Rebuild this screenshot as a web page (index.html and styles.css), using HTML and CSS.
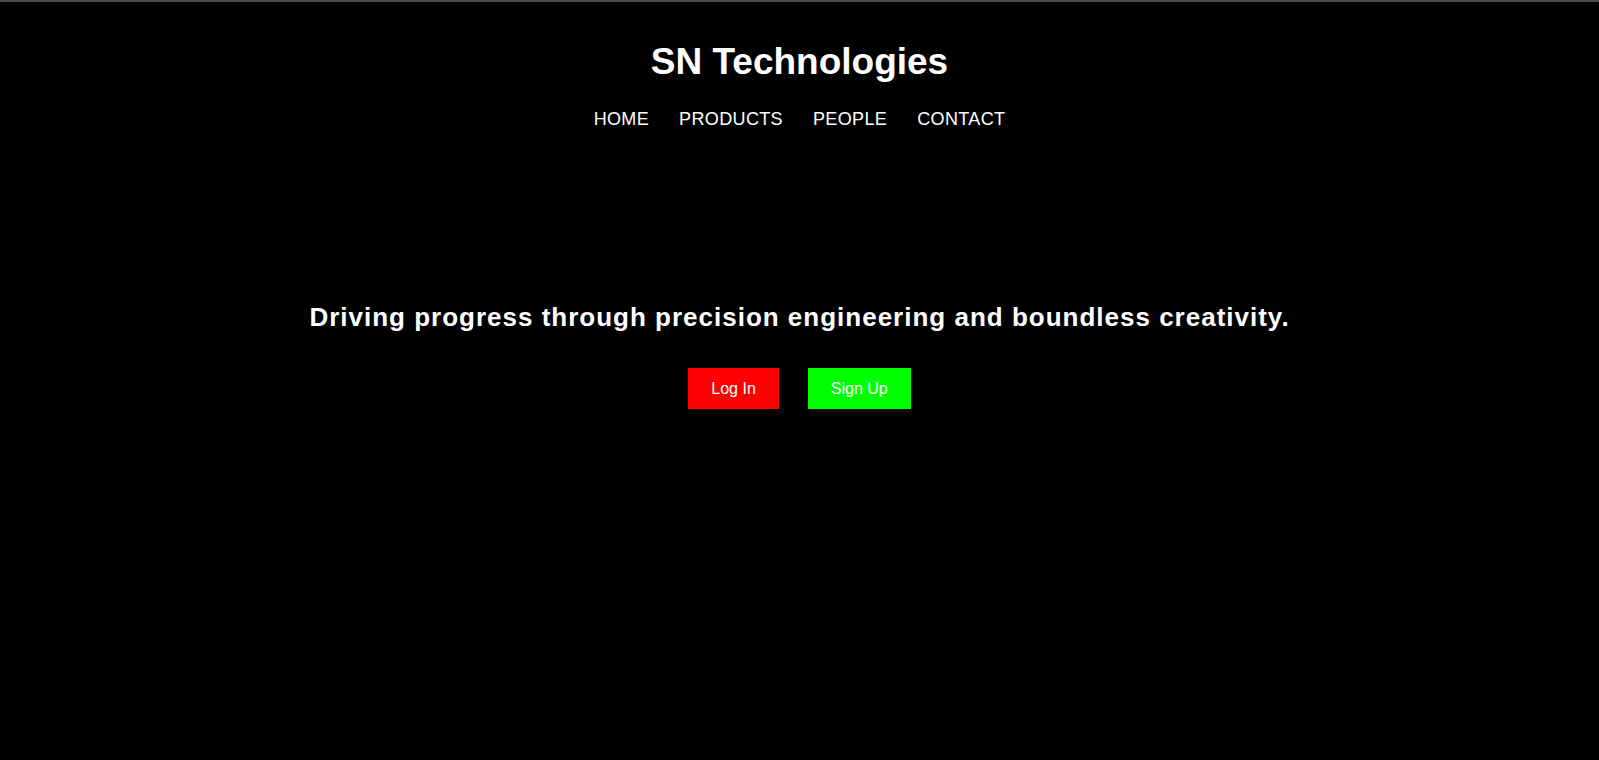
FILE: index.html
```html
<!DOCTYPE html>
<html lang="en">
<head>
<meta charset="utf-8">
<title>SN Technologies</title>
<link rel="stylesheet" href="styles.css">
</head>
<body>
<div class="topline"></div>
<header class="site-header">
  <h1 class="brand">SN Technologies</h1>
  <nav class="nav">
    <a href="#" class="nav-link">HOME</a>
    <a href="#" class="nav-link">PRODUCTS</a>
    <a href="#" class="nav-link">PEOPLE</a>
    <a href="#" class="nav-link">CONTACT</a>
  </nav>
</header>
<main class="hero">
  <h2 class="tagline">Driving progress through precision engineering and boundless creativity.</h2>
  <div class="actions">
    <button class="btn btn-login">Log In</button>
    <button class="btn btn-signup">Sign Up</button>
  </div>
</main>
</body>
</html>
```
FILE: styles.css
```css
html, body {
  margin: 0;
  padding: 0;
  background: #000;
  color: #fff;
  font-family: "Liberation Sans", Arial, sans-serif;
  height: 100%;
}
.topline {
  height: 2px;
  background: #4a4a4a;
}
.site-header {
  display: flex;
  flex-direction: column;
  align-items: center;
}
.brand {
  margin: 39px 0 0;
  font-size: 37px;
  line-height: 41px;
  font-weight: bold;
}
.nav {
  display: flex;
  gap: 30px;
  margin-top: 27px;
}
.nav-link {
  color: #fff;
  text-decoration: none;
  font-size: 18px;
  line-height: 21px;
  letter-spacing: 0.02em;
}
.hero {
  display: flex;
  flex-direction: column;
  align-items: center;
}
.tagline {
  margin: 172px 0 0;
  font-size: 26px;
  line-height: 30px;
  font-weight: bold;
  letter-spacing: 1px;
}
.actions {
  display: flex;
  gap: 29px;
  margin-top: 36px;
}
.btn {
  border: none;
  color: #fff;
  font-family: "Liberation Sans", Arial, sans-serif;
  font-size: 16px;
  line-height: 19px;
  height: 41px;
  padding: 0 23px;
  cursor: pointer;
}
.btn-login { background: #ff0000; }
.btn-signup { background: #00ff00; }
```
